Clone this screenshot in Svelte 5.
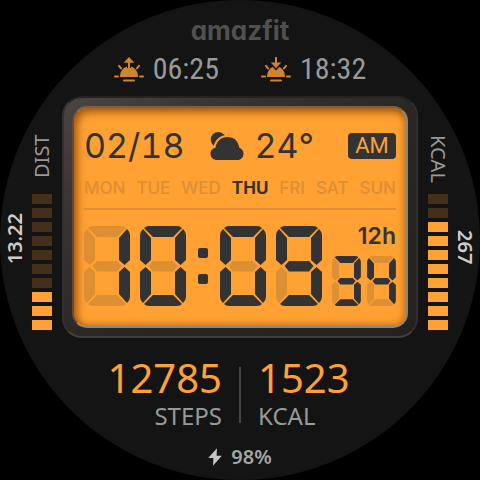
<script>
  const weekdays = ['MON', 'TUE', 'WED', 'THU', 'FRI', 'SAT', 'SUN'];
  const today = 'THU';

  const segmentShapes = {
    a: 'M4 2 Q6 0 9 0 H37 Q40 0 42 2 L33 11 H13 Z',
    b: 'M43 3 Q46 6 46 9 V34 L40.5 39 L35 34 V12 Z',
    c: 'M40.5 41 L46 46 V71 Q46 74 43 77 L35 68 V46 Z',
    d: 'M13 69 H33 L42 78 Q40 80 37 80 H9 Q6 80 4 78 Z',
    e: 'M5.5 41 L11 46 V68 L3 77 Q0 74 0 71 V46 Z',
    f: 'M3 3 L11 12 V34 L5.5 39 L0 34 V9 Q0 6 3 3 Z',
    g: 'M8.5 40 L13 35 H33 L37.5 40 L33 45.5 H13 Z'
  };
  const names = Object.keys(segmentShapes);
  const lit = {
    0: 'abcdef',
    1: 'bc',
    3: 'abcdg',
    4: 'bcfg',
    9: 'abcdfg'
  };

  const gauges = {
    dist: { label: 'DIST', value: '13.22', level: 3 },
    kcal: { label: 'KCAL', value: '267', level: 8 }
  };
  const steps = Array.from({ length: 10 }, (_, i) => 10 - i);
</script>

{#snippet digit(n)}
  <svg class="digit" viewBox="0 0 46 80" role="img" aria-label={String(n)}>
    {#each names as name}
      <path class:on={lit[n].includes(name)} d={segmentShapes[name]} />
    {/each}
  </svg>
{/snippet}

{#snippet gauge(data, side)}
  <section class="gauge {side}" aria-label={data.label}>
    <strong class="reading">{data.value}</strong>
    <div class="column">
      <span class="caption">{data.label}</span>
      <div class="bars">
        {#each steps as step}
          <i class:full={step <= data.level}></i>
        {/each}
      </div>
    </div>
  </section>
{/snippet}

<main>
  <div class="face">
    <div class="brand">amazfit</div>

    <div class="sun">
      <div class="sun-time">
        <svg width="30" height="25" viewBox="0 0 30 25" aria-hidden="true">
          <path class="fill" d="M6 20 C6 13.5 10 9.2 15 9.2 C20 9.2 24 13.5 24 20 Z" />
          <path class="cut" d="M15 8 V11" />
          <path class="line" d="M15 4 V12 M1 19.5 H4 M26 19.5 H29 M5 8.8 L7 11.4 M25 8.8 L23 11.4 M10 23.6 H20" />
          <path class="fill" d="M15 0 L20.3 5.8 H9.7 Z" />
        </svg>
        <time>06:25</time>
      </div>
      <div class="sun-time">
        <svg width="30" height="25" viewBox="0 0 30 25" aria-hidden="true">
          <path class="fill" d="M6 20 C6 13.5 10 9.2 15 9.2 C20 9.2 24 13.5 24 20 Z" />
          <path class="cut" d="M11 6 L15 10.5 L19 6" />
          <path class="line" d="M15 0.5 V7 M1 19.5 H4 M26 19.5 H29 M5 8.8 L7 11.4 M25 8.8 L23 11.4 M10 23.6 H20" />
          <path class="fill" d="M9.8 5.5 H20.2 L15 11.2 Z" />
        </svg>
        <time>18:32</time>
      </div>
    </div>

    <div class="middle">
      {@render gauge(gauges.dist, 'left')}

      <div class="bezel">
        <div class="lcd">
          <div class="top">
            <span class="big">02/18</span>
            <span class="weather">
              <svg width="34" height="28" viewBox="0 0 34 28" aria-hidden="true">
                <circle cx="8.3" cy="7.6" r="7.6" />
                <path class="halo" d="M7.5 28 C3 28 .5 25 .5 21.7 C.5 18.5 2.8 16.2 5.5 15.7 C6.5 9 11.5 5 17.5 5 C23.5 5 28.5 9 29.3 15.8 C32 16.8 33.5 19 33.5 21.7 C33.5 25.5 31 28 27.5 28 Z" />
                <path d="M7.5 28 C3 28 .5 25 .5 21.7 C.5 18.5 2.8 16.2 5.5 15.7 C6.5 9 11.5 5 17.5 5 C23.5 5 28.5 9 29.3 15.8 C32 16.8 33.5 19 33.5 21.7 C33.5 25.5 31 28 27.5 28 Z" />
              </svg>
              <span class="big">24°</span>
            </span>
            <span class="meridiem">AM</span>
          </div>

          <div class="week">
            {#each weekdays as day}
              <span class:today={day === today}>{day}</span>
            {/each}
          </div>

          <div class="clock">
            {@render digit(1)}
            {@render digit(0)}
            <div class="colon"><i></i><i></i></div>
            {@render digit(0)}
            {@render digit(9)}
            <div class="side">
              <span class="mode">12h</span>
              <div class="seconds">
                {@render digit(3)}
                {@render digit(4)}
              </div>
            </div>
          </div>
        </div>
      </div>

      {@render gauge(gauges.kcal, 'right')}
    </div>

    <div class="stats">
      <div class="stat end">
        <span class="count">12785</span>
        <span class="unit">STEPS</span>
      </div>
      <div class="rule"></div>
      <div class="stat">
        <span class="count">1523</span>
        <span class="unit">KCAL</span>
      </div>
    </div>

    <div class="battery">
      <svg width="14" height="18" viewBox="0 0 14 18" aria-hidden="true">
        <path d="M9 0.2 L0.2 10 H5.4 L5 17.8 L13.8 7.8 H8.6 Z" />
      </svg>
      <span>98%</span>
    </div>
  </div>
</main>

<style>
  :global(body) {
    margin: 0;
    background: #000;
  }
  main {
    min-height: 100vh;
    display: flex;
    align-items: center;
    justify-content: center;
  }
  .face {
    box-sizing: border-box;
    width: 100%;
    max-width: 480px;
    aspect-ratio: 1;
    border-radius: 50%;
    background: #141414;
    display: flex;
    flex-direction: column;
    font-family: 'Noto Sans', 'Open Sans', sans-serif;
    color: #999;
  }
  .brand {
    padding-top: 12px;
    text-align: center;
    font: 700 26px/38px Inter, sans-serif;
    font-feature-settings: 'cv11';
    color: #505050;
  }
  .sun {
    display: flex;
    justify-content: center;
    gap: 42px;
    height: 46px;
  }
  .sun-time {
    display: flex;
    align-items: center;
    gap: 9px;
    height: 38px;
  }
  .sun-time time {
    font: 400 30px/38px 'Roboto Condensed', 'Liberation Sans Narrow', 'DejaVu Sans Condensed', sans-serif;
  }
  .fill {
    fill: #d0842d;
  }
  .line {
    fill: none;
    stroke: #d0842d;
    stroke-width: 2;
    stroke-linecap: round;
  }
  .cut {
    fill: none;
    stroke: #141414;
    stroke-width: 4;
  }

  .middle {
    display: flex;
  }
  .gauge {
    flex: none;
    width: 62px;
    box-sizing: border-box;
    padding: 39px 10px 8px 0;
    display: flex;
    justify-content: flex-end;
    gap: 7px;
  }
  .gauge.right {
    flex-direction: row-reverse;
    padding: 39px 0 8px 10px;
  }
  .column {
    width: 20px;
    display: flex;
    flex-direction: column;
    justify-content: space-between;
  }
  .caption,
  .reading {
    writing-mode: vertical-rl;
    font-size: 20px;
    line-height: 20px;
  }
  .caption {
    height: 50px;
  }
  .reading {
    align-self: flex-end;
    padding-bottom: 66px;
    font-weight: 600;
    color: #ccc;
  }
  .left .caption,
  .left .reading {
    transform: rotate(180deg);
  }
  .left .caption {
    text-align: end;
  }
  .left .reading {
    padding: 66px 0 0;
  }
  .bars {
    display: grid;
    gap: 4px;
  }
  .bars i {
    height: 10px;
    background: #432f1a;
  }
  .bars .full {
    background: #ffa133;
  }

  .bezel {
    flex: 1;
    min-width: 0;
    box-sizing: border-box;
    padding: 8px;
    border: 2px solid;
    border-color: #242322 #2f2f2f #403f3f #333231;
    border-radius: 20px;
    background: linear-gradient(145deg, #4c4543 0%, #3a3432 22%, #2a2624 55%, #25211f 100%);
  }
  .lcd {
    border: 2px solid;
    border-color: #77604c #8e8780 #8e8780 #5f4c3c;
    border-radius: 15px;
    padding: 20px 10px;
    background: #ffa133;
    box-shadow: inset 3px 4px 9px rgba(130, 62, 0, 0.75), inset -2px -2px 7px rgba(150, 80, 0, 0.4);
    color: #333;
    font-family: Inter, 'Noto Sans', sans-serif;
  }
  .top {
    display: flex;
    align-items: center;
    justify-content: space-between;
    height: 36px;
  }
  .big {
    font-size: 34px;
    line-height: 36px;
    font-variant-numeric: tabular-nums;
  }
  .weather {
    display: flex;
    align-items: center;
    gap: 10px;
    padding-right: 8px;
  }
  .weather svg {
    fill: #333;
  }
  .weather .halo {
    fill: #ffa133;
    stroke: #ffa133;
    stroke-width: 4;
  }
  .meridiem {
    width: 48px;
    border-radius: 4px;
    background: #333;
    color: #ffa133;
    text-align: center;
    font: 400 22px/26px Roboto, sans-serif;
  }
  .week {
    display: flex;
    justify-content: space-between;
    height: 44px;
    border-bottom: 2px solid #dd8f34;
    font-size: 17px;
    line-height: 48px;
    font-weight: 500;
    color: #dd8f34;
  }
  .today {
    font-weight: 700;
    color: #333;
  }
  .clock {
    display: flex;
    justify-content: space-between;
    height: 80px;
    margin-top: 16px;
  }
  .digit {
    height: 80px;
    width: 46px;
    fill: #dd8f34;
  }
  .digit .on {
    fill: #333;
  }
  .colon {
    display: flex;
    flex-direction: column;
    justify-content: center;
    gap: 16px;
    padding: 0 2px;
  }
  .colon i {
    width: 10px;
    height: 10px;
    border-radius: 2px;
    background: #333;
  }
  .side {
    display: flex;
    flex-direction: column;
    justify-content: space-between;
    align-items: flex-end;
  }
  .mode {
    font-size: 23px;
    line-height: 20px;
    font-weight: 600;
  }
  .seconds {
    display: flex;
    gap: 6px;
  }
  .seconds .digit {
    width: 29px;
    height: 50px;
  }

  .stats {
    display: grid;
    grid-template-columns: 1fr 2px 1fr;
    gap: 17px;
    margin-top: 19px;
  }
  .stat {
    display: flex;
    flex-direction: column;
  }
  .end {
    align-items: flex-end;
  }
  .count {
    font-size: 40px;
    line-height: 42px;
    color: #ffa133;
  }
  .unit {
    font-size: 24px;
    line-height: 34px;
  }
  .rule {
    margin: 10px 0;
    background: #444;
  }
  .battery {
    display: flex;
    align-items: center;
    justify-content: center;
    gap: 9px;
    margin-top: 10px;
    font-size: 20px;
    line-height: 28px;
    font-weight: 600;
    color: #a6a6a6;
  }
  .battery svg {
    fill: #c4c4c4;
  }
</style>
